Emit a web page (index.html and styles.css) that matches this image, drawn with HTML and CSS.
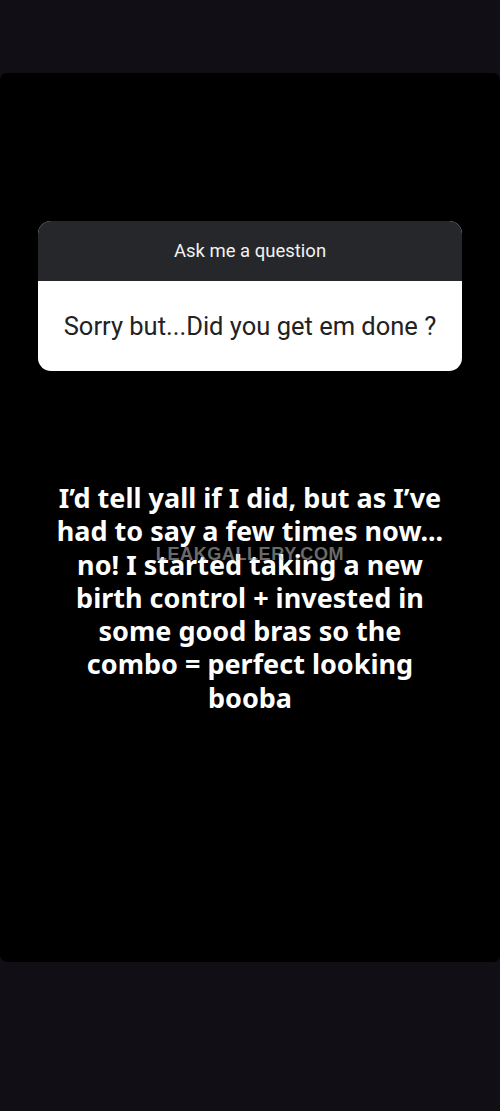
FILE: index.html
```html
<!DOCTYPE html>
<html>
<head>
<meta charset="utf-8">
<link rel="stylesheet" href="styles.css">
</head>
<body>
<div class="story">
  <div class="qbox">
    <div class="qhead">Ask me a question</div>
    <div class="qbody">Sorry but...Did you get em done ?</div>
  </div>
  <div class="answer">
    <p class="text">I’d tell yall if I did, but as I’ve<br>had to say a few times now...<br>no! I started taking a new<br>birth control + invested in<br>some good bras so the<br>combo = perfect looking<br>booba</p>
    <div class="watermark">LEAKGALLERY.COM</div>
  </div>
</div>
</body>
</html>
```

FILE: styles.css
```css
html, body {
  margin: 0;
  padding: 0;
  background: #110f15;
  width: 500px;
  height: 1111px;
  overflow: hidden;
}
.story {
  margin-top: 73px;
  height: 889px;
  background: #000;
  border-radius: 7px;
  padding-top: 148px;
  box-sizing: border-box;
}
.qbox {
  margin: 0 38px;
  border-radius: 13px;
  overflow: hidden;
  background: #fff;
}
.qhead {
  height: 60px;
  background: #25272b;
  color: #f2f2f2;
  font-family: Roboto, "Liberation Sans", sans-serif;
  font-size: 18.5px;
  display: flex;
  align-items: center;
  justify-content: center;
}
.qbody {
  height: 90px;
  color: #222;
  font-family: Roboto, "Liberation Sans", sans-serif;
  font-size: 25.5px;
  display: flex;
  align-items: center;
  justify-content: center;
}
.answer {
  position: relative;
  margin-top: 110px;
}
.text {
  margin: 0;
  color: #fff;
  font-family: "Noto Sans", sans-serif;
  font-weight: 700;
  font-size: 27px;
  line-height: 33.3px;
  text-align: center;
}
.watermark {
  position: absolute;
  left: 0;
  right: 0;
  top: 66px;
  text-align: center;
  font-family: "Liberation Sans", sans-serif;
  font-weight: 700;
  font-size: 18px;
  line-height: 14px;
  color: rgba(200, 200, 200, 0.55);
  letter-spacing: 0.6px;
}
```
